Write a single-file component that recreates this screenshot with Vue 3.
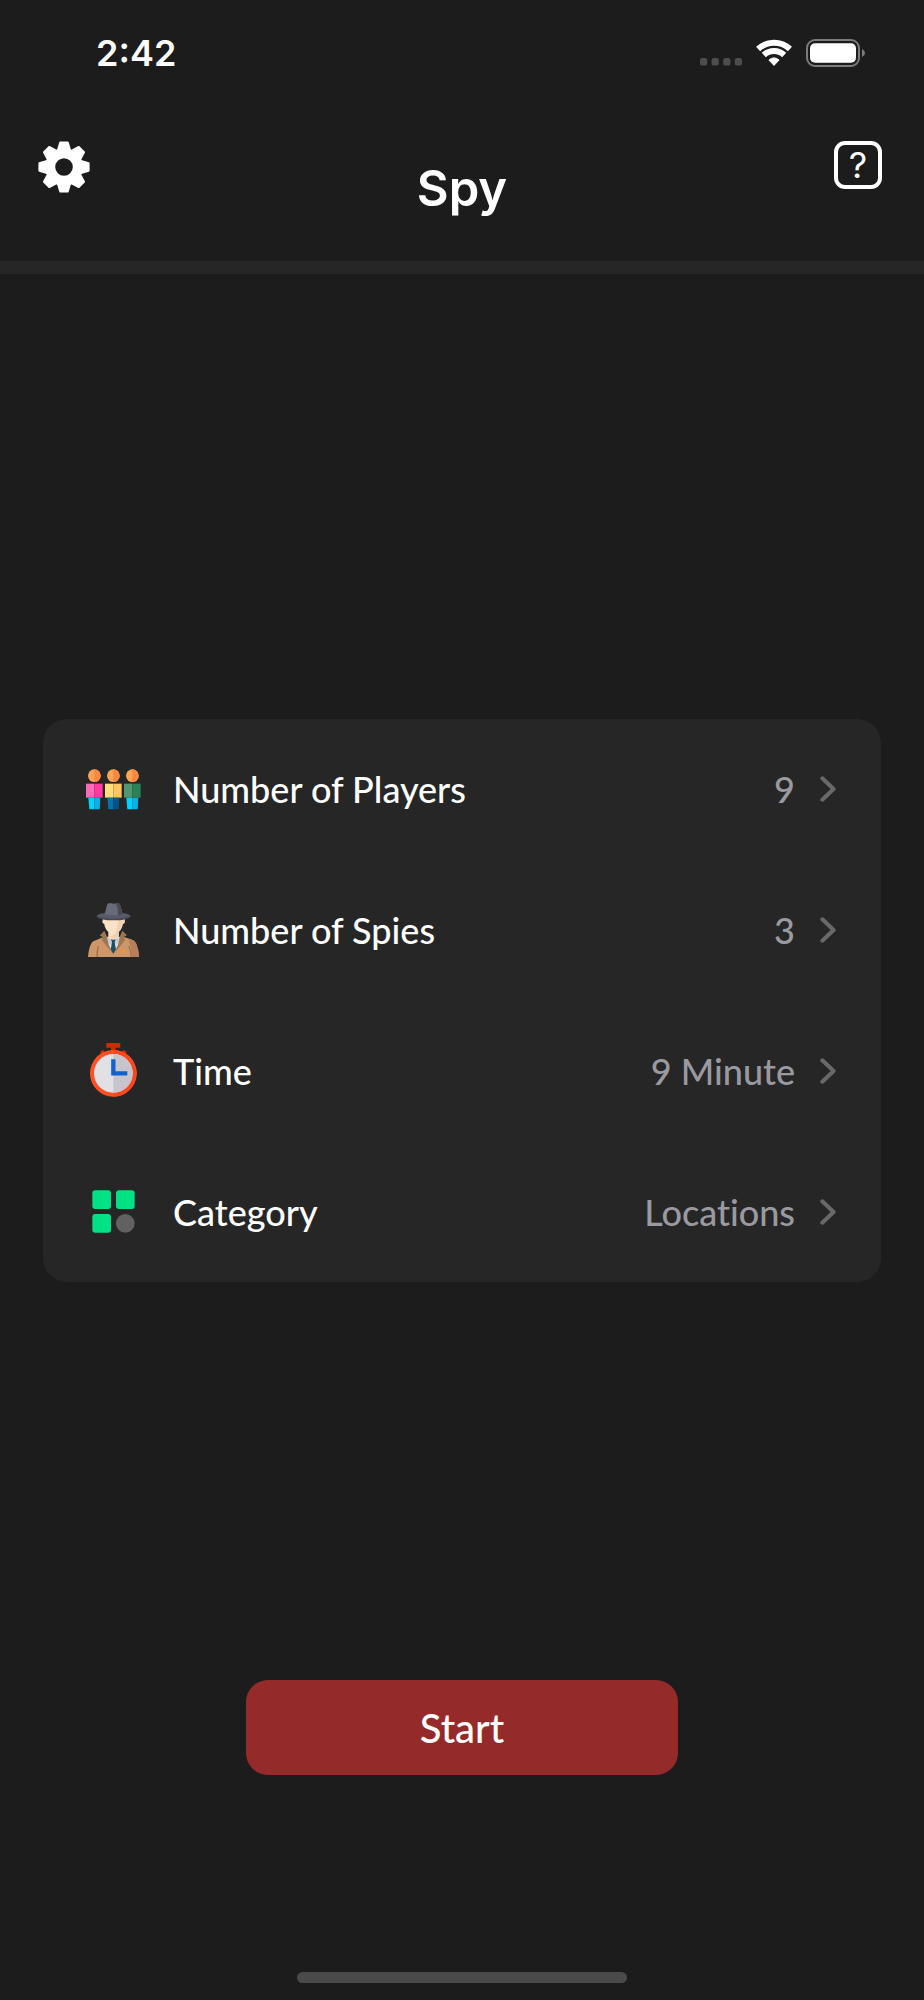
<template>
  <div class="screen">
    <header class="top">
      <div class="status-bar">
        <span class="clock">2:42</span>
        <div class="status-icons">
          <svg class="signal" width="42" height="28" viewBox="0 0 42 28" aria-hidden="true">
            <rect v-for="n in 4" :key="n" :x="(n - 1) * 11.6" y="19" width="7.2" height="7.6" rx="2.2" />
          </svg>
          <svg class="wifi" width="36" height="28" viewBox="0 0 36 28" aria-hidden="true">
            <path class="wifi-outer" d="M2.1 10A23.3 23.3 0 0 1 33.9 10" />
            <path class="wifi-mid" d="M7.8 16A15 15 0 0 1 28.2 16" />
            <path class="wifi-dot" d="M18 26.4L12.9 21Q18 16.8 23.1 21Z" />
          </svg>
          <svg class="battery" width="59" height="28" viewBox="0 0 59 28" aria-hidden="true">
            <rect class="battery-case" x="1" y="1" width="52" height="26" rx="8" />
            <rect class="battery-level" x="4" y="4.3" width="46" height="19.4" rx="5" />
            <path class="battery-cap" d="M56 10q3 1.4 3 4t-3 4z" />
          </svg>
        </div>
      </div>

      <nav class="nav">
        <button type="button" class="nav-button" aria-label="Settings">
          <svg width="52" height="52" viewBox="-26 -26 52 52" aria-hidden="true">
            <g class="gear">
              <path
                v-for="n in 8"
                :key="n"
                d="M-3.7 -24.6H3.7L6 -17H-6Z"
                :transform="`rotate(${n * 45})`"
              />
              <circle class="gear-ring" r="13.8" />
            </g>
          </svg>
        </button>
        <h1 class="title">Spy</h1>
        <button type="button" class="nav-button help" aria-label="Help">?</button>
      </nav>
    </header>

    <main class="card">
      <button v-for="row in rows" :key="row.id" type="button" class="row">
        <svg v-if="row.id === 'players'" class="row-icon" viewBox="48 33 168 168" aria-hidden="true">
          <g v-for="p in people" :key="p.x" :transform="`translate(${p.x} 0)`">
            <circle cx="25" cy="77" r="19" fill="#ffa451" />
            <path d="M25 58a19 19 0 0 1 0 38z" fill="#ff8640" />
            <path d="M0 101h25v42H0z" :fill="p.shirt[0]" />
            <path d="M25 101h25v42H25z" :fill="p.shirt[1]" />
            <path d="M7 143h18v35H10z" :fill="p.legs[0]" />
            <path d="M25 143h18l-2 35H25z" :fill="p.legs[1]" />
          </g>
        </svg>

        <svg v-else-if="row.id === 'spies'" class="row-icon" viewBox="48 36 168 168" aria-hidden="true">
          <!-- coat -->
          <path d="M54 201q2-28 11-43 5-6 14-8l24-10h56l24 8q11 3 15 12 8 18 9 41z" fill="#cd976a" />
          <path d="M174 146l11 3q11 4 14 12 7 17 8 40h-21q-1-32-12-55z" fill="#b67f58" />
          <path d="M85 168q-4 14-4 33M176 168q7 14 8 33" fill="none" stroke="#a0714a" stroke-width="4" />
          <rect x="150" y="180" width="18" height="8" rx="2" fill="#ee963c" />
          <!-- shirt and tie -->
          <path d="M112 141l18-3 19 3-3 28-16 19-16-20z" fill="#e4e9ee" />
          <path d="M112 141l18 9-8 16-12-14zM149 141l-19 9 9 15 11-13z" fill="#c4cbd3" />
          <path d="M123 148h14l-3 8 4 23-8 12-8-12 4-23z" fill="#1d4e66" />
          <!-- collar -->
          <path d="M103 122L89 137l10 4-4 9 35 42-13-26-7-27z" fill="#9f774d" />
          <path d="M157 122l14 14-10 5 5 9-36 42 14-28 6-25z" fill="#9f774d" />
          <!-- face -->
          <path d="M99 84h65v12q0 5-6 6-1 14-12 24v14q-8 9-16 9t-15-9v-14q-11-10-12-24-6-1-6-6z" fill="#fbe2c6" />
          <path d="M146 86h18v10q0 5-6 6-1 14-12 24v12q-7 9-16 9l-12-7q20-6 22-24z" fill="#f0d2b0" />
          <!-- hat -->
          <ellipse cx="131" cy="79" rx="51" ry="12" fill="#454855" />
          <path d="M80 78q10-8 27-8h50q16 1 25 8-18 8-51 8t-51-8z" fill="#575a69" />
          <path d="M104 73l7-28q3-7 9-6l11 2 11-2q6 0 9 7l7 27q-27 6-54 0z" fill="#686b78" />
          <path d="M138 40l4-1q6 0 9 7l7 27q-7 3-14 2 1-19-6-35z" fill="#474955" />
        </svg>

        <svg v-else-if="row.id === 'time'" class="row-icon" viewBox="48 39 168 168" aria-hidden="true">
          <path d="M109 39h42v14h-14v10h-14V53h-14zM90 66l9-7 7 9-9 7zM170 66l-9-7-7 9 9 7z" fill="#cb2c03" />
          <circle cx="130" cy="130" r="70" fill="#ff5024" />
          <path d="M130 60a70 70 0 0 1 0 140z" fill="#fb471e" />
          <circle cx="130" cy="130" r="58" fill="#e1e0e5" />
          <path d="M130 72a58 58 0 0 1 0 116z" fill="#c7c5cc" />
          <path d="M130 88v42h42" fill="none" stroke="#1261d1" stroke-width="13" />
        </svg>

        <svg v-else class="row-icon" viewBox="48 39 168 168" aria-hidden="true">
          <g fill="#00e284">
            <rect x="67" y="58" width="56" height="56" rx="9" />
            <rect x="138" y="58" width="56" height="56" rx="9" />
            <rect x="67" y="129" width="56" height="56" rx="9" />
          </g>
          <circle cx="166" cy="157" r="28" fill="#616161" />
        </svg>

        <span class="row-label">{{ row.label }}</span>
        <span class="row-value">{{ row.value }}</span>
        <svg class="chevron" width="16" height="26" viewBox="0 0 16 26" aria-hidden="true">
          <path d="M2.3 2.3L13.6 13 2.3 23.7" />
        </svg>
      </button>
    </main>

    <footer class="bottom">
      <button type="button" class="start">Start</button>
      <div class="home-indicator"></div>
    </footer>
  </div>
</template>

<script setup>
import { ref } from 'vue';

const rows = ref([
  { id: 'players', label: 'Number of Players', value: '9' },
  { id: 'spies', label: 'Number of Spies', value: '3' },
  { id: 'time', label: 'Time', value: '9 Minute' },
  { id: 'category', label: 'Category', value: 'Locations' }
]);

// left half / right half colors of each figure
const people = [
  { x: 48, shirt: ['#ff68b6', '#ff3aa2'], legs: ['#00d1ff', '#08b1e8'] },
  { x: 105, shirt: ['#ffdd7c', '#ffc65b'], legs: ['#0673aa', '#03538c'] },
  { x: 162, shirt: ['#519770', '#2a8155'], legs: ['#00d1ff', '#08b1e8'] }
];
</script>

<style>
body {
  background: #1c1c1c;
}
</style>

<style scoped>
.screen {
  display: grid;
  grid-template-rows: 1fr auto 1fr;
  min-height: 100vh;
  background: #1c1c1c;
  color: #fff;
  font-family: Lato, sans-serif;
}

button {
  padding: 0;
  border: 0;
  background: none;
  color: inherit;
  font-family: inherit;
  font-variant-ligatures: none;
  cursor: pointer;
}

.top {
  padding-bottom: 80px;
}

.status-bar {
  display: flex;
  align-items: center;
  justify-content: space-between;
  height: 105px;
  padding: 0 59px 0 96px;
}

.clock {
  font-family: Inter, sans-serif;
  font-size: 36px;
  font-weight: 600;
}

.status-icons {
  display: flex;
  align-items: center;
  gap: 14px;
}

.signal {
  fill: #4d4d4d;
}

.wifi-outer,
.wifi-mid {
  fill: none;
  stroke: #fff;
  stroke-width: 6;
}

.wifi-dot {
  fill: #fff;
  stroke: #fff;
  stroke-width: 1;
  stroke-linejoin: round;
}

.battery-case {
  fill: none;
  stroke: #7b7b7b;
  stroke-width: 2;
}

.battery-level {
  fill: #fff;
}

.battery-cap {
  fill: #7b7b7b;
}

.nav {
  display: grid;
  grid-template-columns: 1fr auto 1fr;
  align-items: start;
  height: 120px;
  padding: 36px 38px 0;
  border-bottom: 13px solid #262626;
}

.nav-button {
  justify-self: start;
}

.nav-button svg {
  display: block;
}

.gear {
  fill: #fff;
  stroke: #fff;
  stroke-width: 2;
  stroke-linejoin: round;
}

.gear-ring {
  fill: #1c1c1c;
  stroke-width: 10;
}

.title {
  margin: 18px 0 0;
  font-family: Inter, sans-serif;
  font-size: 49px;
  font-weight: 600;
  line-height: 60px;
}

.help {
  justify-self: end;
  width: 48px;
  height: 48px;
  margin-right: 4px;
  border: 4px solid #fff;
  border-radius: 11px;
  font-family: Inter, sans-serif;
  font-size: 36px;
  font-weight: 400;
  line-height: 40px;
}

.card {
  margin: 0 43px;
  border-radius: 24px;
  background: #262626;
  overflow: hidden;
}

.row {
  display: flex;
  align-items: center;
  box-sizing: content-box;
  width: calc(100% - 88px);
  min-height: 140px;
  padding: 0 45px 0 43px;
  font-size: 36px;
  font-weight: 500;
  line-height: 44px;
  text-align: left;
}

.row + .row {
  border-top: 1px solid #23272a;
}

.row-icon {
  flex: none;
  width: 56px;
  height: 56px;
}

.row-label {
  flex: 1;
  margin-left: 31px;
}

.row-value {
  margin-right: 25px;
  color: #9a99a0;
}

.chevron {
  flex: none;
  fill: none;
  stroke: #69696b;
  stroke-width: 4;
  stroke-linecap: round;
  stroke-linejoin: round;
}

.bottom {
  display: flex;
  flex-direction: column;
  align-items: center;
  justify-content: flex-end;
  padding: 80px 43px 17px;
}

.start {
  width: 432px;
  max-width: 100%;
  height: 95px;
  border-radius: 22px;
  background: #952a2b;
  font-size: 40px;
  font-weight: 500;
}

.home-indicator {
  width: 330px;
  max-width: 80%;
  height: 11px;
  margin-top: 197px;
  border-radius: 6px;
  background: #4a4a4a;
}
</style>
